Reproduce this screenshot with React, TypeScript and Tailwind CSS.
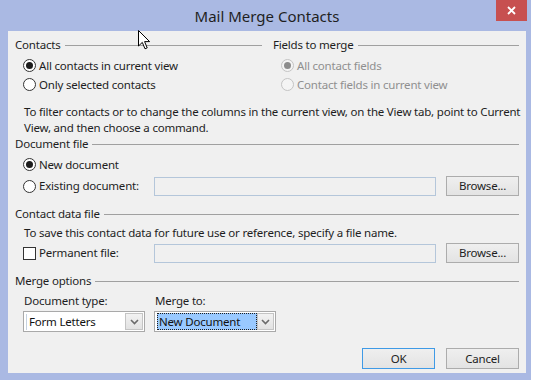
import React from "react";

const font = "font-['Noto_Sans','Liberation_Sans',sans-serif]";
const txt = "text-[11.5px] leading-[16px] tracking-[-0.2px]";

function GroupHeading({ label, className = "" }: { label: string; className?: string }) {
  return (
    <div className={`flex h-[16px] items-center ${className}`}>
      <span className={`${txt} text-[#1e1e1e]`}>{label}</span>
      <div className="ml-[4px] flex-1 border-t border-[#a0a0a0]"></div>
    </div>
  );
}

function Radio({
  label,
  checked = false,
  disabled = false,
}: {
  label: string;
  checked?: boolean;
  disabled?: boolean;
}) {
  return (
    <div className="flex h-[19px] items-center">
      <span
        className={`flex h-[13px] w-[13px] items-center justify-center rounded-full border ${
          disabled ? "border-[#c4c4c4] bg-[#f4f4f4]" : "border-[#333] bg-white"
        }`}
      >
        {checked && (
          <span
            className={`h-[7px] w-[7px] rounded-full ${disabled ? "bg-[#8c8c8c]" : "bg-[#1c1c1c]"}`}
          ></span>
        )}
      </span>
      <span className={`ml-[3px] ${txt} ${disabled ? "text-[#8f8f8f]" : "text-[#1e1e1e]"}`}>
        {label}
      </span>
    </div>
  );
}

function Button({ label, primary = false, tall = false }: { label: string; primary?: boolean; tall?: boolean }) {
  return (
    <button
      className={`flex w-[73px] items-center justify-center border bg-gradient-to-b from-[#efefef] to-[#e3e3e3] ${txt} text-[#1e1e1e] ${
        tall ? "h-[21px]" : "h-[20px]"
      } ${primary ? "border-[#3f9ae6]" : "border-[#acacac]"}`}
    >
      {label}
    </button>
  );
}

function FileInput() {
  return <div className="h-[19px] w-[282px] border border-[#b4c6da] bg-[#f0f0f0]"></div>;
}

function Chevron() {
  return (
    <svg width="9" height="6" viewBox="0 0 9 6" className="text-[#6a6a6a]">
      <path d="M1 1 L4.5 4.5 L8 1" fill="none" stroke="currentColor" strokeWidth="1.6" />
    </svg>
  );
}

function Select({ value, highlighted = false }: { value: string; highlighted?: boolean }) {
  return (
    <div className="flex h-[21px] w-[122px] items-center border border-[#a9a9a9] bg-white p-[1px]">
      <div className="flex h-full flex-1 items-center pl-[1px]">
        {highlighted ? (
          <span
            className={`flex h-[17px] w-[100px] items-center border border-dotted border-[#1f1f1f] bg-[#99c9ff] pl-[1px] ${txt} text-[#111]`}
          >
            {value}
          </span>
        ) : (
          <span className={`border-l border-[#c6d2e0] pl-[2px] ${txt} text-[#111]`}>{value}</span>
        )}
      </div>
      <div className="flex h-[17px] w-[18px] items-center justify-center border border-[#c4c4c4] bg-gradient-to-b from-[#f2f2f2] to-[#e2e2e2]">
        <Chevron />
      </div>
    </div>
  );
}

function Cursor() {
  return (
    <svg width="13" height="20" viewBox="0 0 13 20" className="absolute left-[138px] top-[30px]">
      <path
        d="M0.5 0.5 L0.5 16 L4.3 12.4 L7 18.8 L9.2 17.9 L6.6 11.6 L11.6 11.6 Z"
        fill="white"
        stroke="black"
        strokeWidth="1"
      />
    </svg>
  );
}

export default function App() {
  return (
    <div className={`relative h-[383px] w-[534px] bg-white ${font}`}>
      <div className="flex h-[380px] w-[531px] flex-col bg-[#aab9e3] pb-[7px] pl-[8px] pr-[5px]">
        {/* title bar */}
        <div className="relative flex h-[31px] shrink-0 items-center justify-center">
          <span className="text-[15px] leading-[20px] text-[#1f1f1f]">Mail Merge Contacts</span>
          <div className="absolute right-[-1px] top-0 flex h-[21px] w-[31px] items-center justify-center bg-[#c75050]">
            <svg width="9" height="9" viewBox="0 0 9 9">
              <path d="M1 1 L8 8 M8 1 L1 8" stroke="white" strokeWidth="1.8" />
            </svg>
          </div>
        </div>

        {/* body */}
        <div className="flex min-h-0 flex-1 flex-col bg-[#f0f0f0] px-[7px]">
          <div className="mt-[6px] grid grid-cols-[247px_1fr] gap-x-[11px]">
            <div>
              <GroupHeading label="Contacts" />
              <div className="mt-[3px] pl-[8px]">
                <Radio label="All contacts in current view" checked />
                <Radio label="Only selected contacts" />
              </div>
            </div>
            <div>
              <GroupHeading label="Fields to merge" />
              <div className="mt-[3px] pl-[8px]">
                <Radio label="All contact fields" checked disabled />
                <Radio label="Contact fields in current view" disabled />
              </div>
            </div>
          </div>

          <p className={`mt-[10px] whitespace-nowrap pl-[9px] ${txt} leading-[15px] text-[#1e1e1e]`}>
            To filter contacts or to change the columns in the current view, on the View tab, point to Current
            <br />
            View, and then choose a command.
          </p>

          <GroupHeading label="Document file" />
          <div className="mt-[3px] pl-[8px]">
            <Radio label="New document" checked />
            <div className="mt-[1px] flex h-[22px] items-center">
              <div className="w-[131px]">
                <Radio label="Existing document:" />
              </div>
              <FileInput />
              <div className="ml-[10px]">
                <Button label="Browse..." />
              </div>
            </div>
          </div>

          <GroupHeading label="Contact data file" className="mt-[9px]" />
          <p className={`mt-[3px] pl-[9px] ${txt} text-[#1e1e1e]`}>
            To save this contact data for future use or reference, specify a file name.
          </p>
          <div className="mt-[1px] flex h-[22px] items-center pl-[8px]">
            <div className="flex w-[131px] items-center">
              <span className="h-[13px] w-[13px] border border-[#333] bg-white"></span>
              <span className={`ml-[3px] ${txt} text-[#1e1e1e]`}>Permanent file:</span>
            </div>
            <FileInput />
            <div className="ml-[10px]">
              <Button label="Browse..." />
            </div>
          </div>

          <GroupHeading label="Merge options" className="mt-[9px]" />
          <div className="mt-[4px] flex gap-x-[9px] pl-[8px]">
            <div className="flex flex-col">
              <span className={`h-[16px] pl-[1px] ${txt} text-[#1e1e1e]`}>Document type:</span>
              <div className="mt-[2px]">
                <Select value="Form Letters" />
              </div>
            </div>
            <div className="flex flex-col">
              <span className={`h-[16px] pl-[1px] ${txt} text-[#1e1e1e]`}>Merge to:</span>
              <div className="mt-[2px]">
                <Select value="New Document" highlighted />
              </div>
            </div>
          </div>

          <div className="mt-[16px] flex justify-end gap-x-[11px]">
            <Button label="OK" primary tall />
            <Button label="Cancel" tall />
          </div>
        </div>
      </div>
      <Cursor />
    </div>
  );
}
